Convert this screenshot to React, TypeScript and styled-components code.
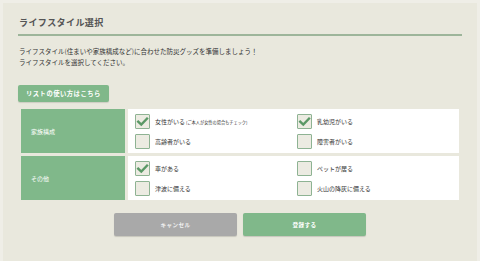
import React from "react";
import styled, { createGlobalStyle } from "styled-components";

const GlobalStyle = createGlobalStyle`
  html, body {
    margin: 0;
    padding: 0;
    background: #efeee7;
    font-family: "Noto Sans CJK JP", "Noto Sans", sans-serif;
    color: #333333;
  }
`;

const Panel = styled.div`
  margin: 3px 3px 0 3px;
  padding: 14px 15px 22px 15px;
  background: #e9e8dd;
  min-height: 222px;
`;

const Title = styled.h1`
  margin: 0;
  padding: 0 0 5px 1px;
  font-size: 9px;
  line-height: 12px;
  font-weight: bold;
  color: #555555;
  letter-spacing: 0.4px;
  border-bottom: 2px solid #9db59a;
`;

const Lead = styled.p`
  margin: 10px 0 0 0;
  padding-left: 1px;
  font-size: 6.5px;
  line-height: 11px;
  color: #333333;
`;

const GuideButton = styled.button`
  display: flex;
  align-items: center;
  margin-top: 17px;
  width: 91px;
  height: 17px;
  padding: 0 0 0 8px;
  border: none;
  border-radius: 2px;
  background: #80b88a;
  box-shadow: 0 1px 1px rgba(0, 0, 0, 0.12);
  color: #ffffff;
  font-family: inherit;
  font-size: 6.3px;
  font-weight: bold;
  letter-spacing: 0.5px;
`;

const Table = styled.div`
  display: flex;
  flex-direction: column;
  gap: 3px;
  margin: 7px 3px 0 3px;
`;

const Row = styled.div`
  display: flex;
  gap: 3px;
  height: 44px;
`;

const HeadCell = styled.div`
  display: flex;
  align-items: center;
  width: 108px;
  padding-left: 10px;
  box-sizing: border-box;
  background: #80b88a;
  color: #ffffff;
  font-size: 6px;
`;

const BodyCell = styled.div`
  flex: 1;
  display: grid;
  grid-template-columns: 162px 162px;
  row-gap: 5px;
  align-content: start;
  padding: 5px 0 0 7px;
  background: #ffffff;
`;

const Option = styled.label`
  display: flex;
  align-items: center;
  gap: 5px;
  height: 15px;
  font-size: 6px;
  color: #333333;
  white-space: nowrap;
`;

const Box = styled.span`
  display: flex;
  align-items: center;
  justify-content: center;
  width: 15px;
  height: 15px;
  box-sizing: border-box;
  border: 1px solid #8eb393;
  border-radius: 1px;
  background: #ecebe2;
`;

const Note = styled.span`
  font-size: 4.2px;
  margin-left: 1px;
`;

const Footer = styled.div`
  display: flex;
  justify-content: center;
  gap: 6px;
  margin-top: 13px;
`;

const ActionButton = styled.button<{ $tone: "grey" | "green" }>`
  width: 123px;
  height: 23px;
  border: none;
  border-radius: 2px;
  background: ${(p) => (p.$tone === "grey" ? "#a9a9a9" : "#80b88a")};
  box-shadow: 0 1px 1px rgba(0, 0, 0, 0.15);
  color: ${(p) => (p.$tone === "grey" ? "#f0f0f0" : "#ffffff")};
  font-family: inherit;
  font-size: 5.6px;
  font-weight: bold;
  letter-spacing: 0.4px;
`;

const Check = ({ on }: { on: boolean }) => (
  <Box>
    {on && (
      <svg width="13" height="13" viewBox="0 0 13 13">
        <polyline
          points="2.2,6.6 5.3,9.6 11,3.6"
          fill="none"
          stroke="#5a9866"
          strokeWidth="2.4"
          strokeLinecap="square"
        />
      </svg>
    )}
  </Box>
);

type Item = { label: string; note?: string; on: boolean };

const groups: { head: string; items: Item[] }[] = [
  {
    head: "家族構成",
    items: [
      { label: "女性がいる", note: "(ご本人が女性の場合もチェック)", on: true },
      { label: "乳幼児がいる", on: true },
      { label: "高齢者がいる", on: false },
      { label: "障害者がいる", on: false },
    ],
  },
  {
    head: "その他",
    items: [
      { label: "車がある", on: true },
      { label: "ペットが居る", on: false },
      { label: "津波に備える", on: false },
      { label: "火山の降灰に備える", on: false },
    ],
  },
];

const App = () => {
  return (
    <>
      <GlobalStyle />
      <Panel>
        <Title>ライフスタイル選択</Title>
        <Lead>
          ライフスタイル(住まいや家族構成など)に合わせた防災グッズを準備しましょう！
          <br />
          ライフスタイルを選択してください。
        </Lead>
        <GuideButton>リストの使い方はこちら</GuideButton>
        <Table>
          {groups.map((g) => (
            <Row key={g.head}>
              <HeadCell>{g.head}</HeadCell>
              <BodyCell>
                {g.items.map((it) => (
                  <Option key={it.label}>
                    <Check on={it.on} />
                    <span>
                      {it.label}
                      {it.note && <Note>{it.note}</Note>}
                    </span>
                  </Option>
                ))}
              </BodyCell>
            </Row>
          ))}
        </Table>
        <Footer>
          <ActionButton $tone="grey">キャンセル</ActionButton>
          <ActionButton $tone="green">登録する</ActionButton>
        </Footer>
      </Panel>
    </>
  );
};

export default App;
